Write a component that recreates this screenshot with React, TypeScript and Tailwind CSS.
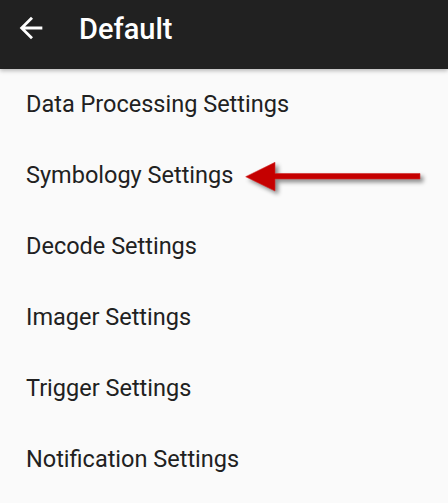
const items = [
  'Data Processing Settings',
  'Symbology Settings',
  'Decode Settings',
  'Imager Settings',
  'Trigger Settings',
  'Notification Settings',
]

function BackIcon() {
  return (
    <svg viewBox="0 0 24 24" className="w-[34px] h-[34px]" fill="#ffffff">
      <path d="M20 11H7.83l5.59-5.59L12 4l-8 8 8 8 1.41-1.41L7.83 13H20v-2z" />
    </svg>
  )
}

// red callout arrow pointing at the highlighted row
function PointerArrow() {
  return (
    <svg
      width="190"
      height="45"
      viewBox="0 0 190 45"
      className="absolute left-[240px] top-[15px] drop-shadow-[3px_3px_2px_rgba(0,0,0,0.45)]"
    >
      <path d="M5.7 21.7 L35 7.3 L35 18.5 L180 18.5 L180 24 L35 24 L35 36 Z" fill="#c50000" stroke="#d42a2a" strokeWidth="0.6" />
    </svg>
  )
}

export default function App() {
  return (
    <div className="w-[448px] h-[503px] bg-[#fafafa] overflow-hidden font-['Roboto',sans-serif]">
      <header className="relative z-10 h-[69px] bg-[#212121] flex items-start shadow-[0_2px_4px_rgba(0,0,0,0.25)]">
        <div className="ml-[14px] mt-[11px] flex">
          <BackIcon />
        </div>
        <h1 className="ml-[31px] mt-[15px] text-white text-[29px] font-medium leading-none">Default</h1>
      </header>

      <ul>
        {items.map((label, i) => (
          <li key={label} className="relative h-[71px] flex items-center pl-[26px]">
            <span className="text-[23.5px] text-[#212121] leading-none">{label}</span>
            {i === 1 && <PointerArrow />}
          </li>
        ))}
      </ul>
    </div>
  )
}
